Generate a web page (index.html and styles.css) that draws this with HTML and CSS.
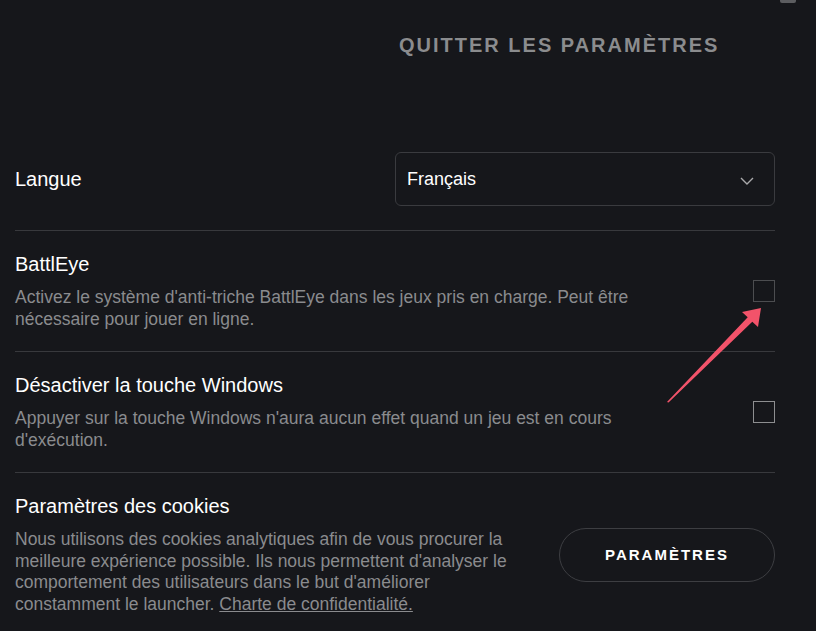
FILE: index.html
```html
<!DOCTYPE html>
<html lang="fr">
    <head>
    <meta charset="UTF-8">
    <meta name="viewport" content="width=device-width, initial-scale=1.0">
    <title>Paramètres</title>
    <link rel="stylesheet" href="styles.css">
    </head>
    <body>
        <div class="barre-haut"></div>

        <header class="entete">
            <span class="quitter">QUITTER LES PARAMÈTRES</span>
        </header>

        <section class="reglages">
            <div class="ligne ligne-langue">
                <span class="titre">Langue</span>
                <div class="liste">
                    <span>Français</span>
                    <svg class="chevron" width="14" height="8" viewBox="0 0 14 8">
                        <path d="M1 1 L7 7 L13 1" fill="none" stroke="#a9a9ab" stroke-width="1.4"/>
                    </svg>
                </div>
            </div>

            <div class="ligne">
                <div class="texte texte-case">
                    <p class="titre">BattlEye</p>
                    <p class="desc">Activez le système d'anti-triche BattlEye dans les jeux pris en charge. Peut être nécessaire pour jouer en ligne.</p>
                </div>
                <input type="checkbox" class="case">
            </div>

            <div class="ligne">
                <div class="texte texte-case">
                    <p class="titre">Désactiver la touche Windows</p>
                    <p class="desc">Appuyer sur la touche Windows n'aura aucun effet quand un jeu est en cours d'exécution.</p>
                </div>
                <input type="checkbox" class="case case-claire">
            </div>

            <div class="ligne ligne-cookies">
                <div class="texte texte-cookies">
                    <p class="titre">Paramètres des cookies</p>
                    <p class="desc">Nous utilisons des cookies analytiques afin de vous procurer la meilleure expérience possible. Ils nous permettent d'analyser le comportement des utilisateurs dans le but d'améliorer constamment le launcher. <a href="#">Charte de confidentialité.</a></p>
                </div>
                <button type="button" class="bouton">PARAMÈTRES</button>
            </div>
        </section>

        <!-- fleche d'annotation par dessus la page -->
        <svg class="fleche" width="110" height="110" viewBox="660 300 110 110">
            <polygon points="667,402 747.7,317.2 742,312 761,308 758,327 752.3,321.8 668.5,402.5" fill="#f2536a"/>
        </svg>
    </body>
</html>
```

FILE: styles.css
```css
/* Ecran des paramètres du launcher */
body {
    font-family: "Liberation Sans", Arial, sans-serif;
    background-color: #16171b;
    color: #ffffff;
    margin: 0;
    padding: 0 41px 0 15px;
}

p {
    margin: 0;
}

.barre-haut {
    position: absolute;
    top: 0;
    left: 780px;
    width: 16px;
    height: 3px;
    background-color: #5c5d60;
    border-radius: 0 0 2px 2px;
}

.entete {
    padding: 33px 0 71px 384px;
    font-size: 20px;
    line-height: 24px;
}

.quitter {
    font-weight: bold;
    letter-spacing: 2px;
    color: #8b8c8e;
}

.ligne {
    display: flex;
    justify-content: space-between;
    align-items: center;
    padding: 21px 0;
    border-bottom: 1px solid #38393d;
}

.ligne-langue {
    padding: 24px 0;
}

.ligne-cookies {
    border-bottom: none;
}

.titre {
    font-size: 20px;
    line-height: 24px;
    color: #ffffff;
}

.desc {
    margin-top: 11px;
    font-size: 17.5px;
    line-height: 21.5px;
    color: #8a8b8e;
}

.desc a {
    color: #8a8b8e;
}

.texte-case {
    max-width: 660px;
}

.texte-cookies {
    max-width: 505px;
}

.liste {
    box-sizing: border-box;
    width: 380px;
    height: 54px;
    display: flex;
    justify-content: space-between;
    align-items: center;
    padding: 0 20px 0 11px;
    border: 1px solid #3a3b3f;
    border-radius: 6px;
    font-size: 18px;
}

.chevron {
    margin-top: 3px;
}

.case {
    appearance: none;
    box-sizing: border-box;
    width: 22px;
    height: 22px;
    margin: 0;
    border: 1px solid #4c4d50;
    background: transparent;
}

.case-claire {
    border-color: #8d8e90;
}

.bouton {
    width: 216px;
    height: 54px;
    border: 1px solid #3d3e42;
    border-radius: 27px;
    background: transparent;
    color: #ffffff;
    font-family: "Liberation Sans", Arial, sans-serif;
    font-size: 15px;
    font-weight: bold;
    letter-spacing: 2px;
    cursor: pointer;
}

.fleche {
    position: absolute;
    left: 660px;
    top: 300px;
}
```
